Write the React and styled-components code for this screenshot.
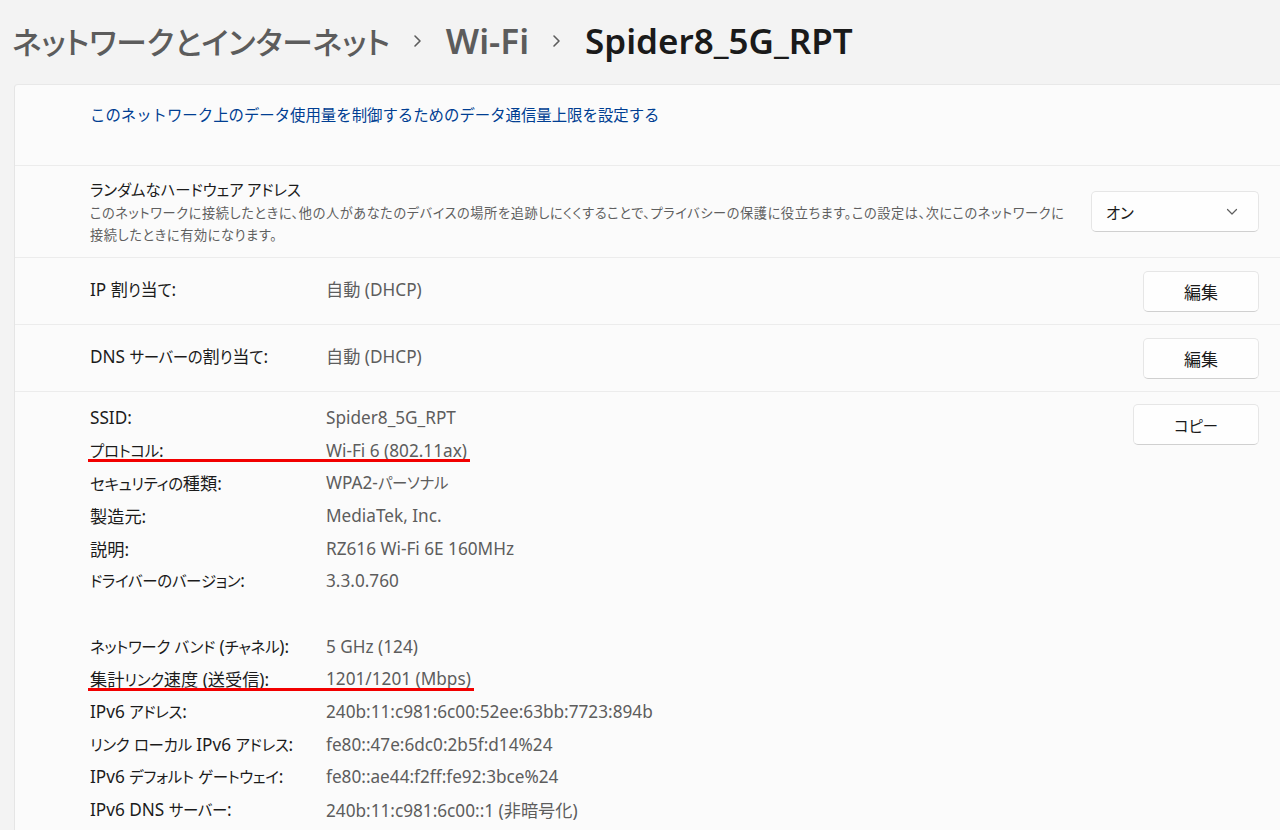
import React from "react";
import styled, { createGlobalStyle } from "styled-components";

const GlobalStyle = createGlobalStyle`
  html, body {
    margin: 0;
    background: #f3f3f3;
    overflow: hidden;
  }
  body {
    font-family: "Noto Sans", "Noto Sans CJK JP", sans-serif;
    color: #1b1b1b;
  }
`;

const jp = `"Noto Sans CJK JP", sans-serif`;

// kana runs in mixed latin/japanese rows are drawn a bit smaller, like Yu Gothic UI
const KANA = /([\u3000-\u30ff\uff01-\uff60]+)/;

const Kana = styled.span`
  font-family: ${jp};
  font-size: 0.9em;
  letter-spacing: -0.3px;
  font-feature-settings: "palt" 1;
`;

const Mixed = ({ text }) =>
  text.split(KANA).map((part, i) =>
    i % 2 ? <Kana key={i}>{part}</Kana> : part,
  );

const StyledPage = styled.div`
  width: 1280px;
  height: 830px;
  display: flex;
  flex-direction: column;
`;

const Breadcrumb = styled.div`
  height: 84px;
  box-sizing: border-box;
  padding: 0 0 3px 12px;
  display: flex;
  align-items: center;
  gap: 22px;
  white-space: nowrap;
`;

const Crumb = styled.span`
  color: ${(p) => (p.$current ? "#1a1a1a" : "#5c5c5c")};
  font-size: ${(p) => (p.$jp ? "30.7px" : "35px")};
  font-weight: ${(p) => (p.$jp ? 500 : 600)};
  font-family: ${(p) => (p.$jp ? jp : "inherit")};
  font-feature-settings: "palt" 1;
`;

const Card = styled.div`
  flex: 1;
  margin-left: 14px;
  background: #fbfbfb;
  border-left: 1px solid #e5e5e5;
  border-top: 1px solid #e8e8e8;
  border-top-left-radius: 4px;
  display: flex;
  flex-direction: column;
`;

const Section = styled.div`
  display: flex;
  align-items: ${(p) => (p.$top ? "flex-start" : "center")};
  justify-content: space-between;
  gap: 24px;
  min-height: ${(p) => p.$height || 0}px;
  padding: ${(p) => p.$pad || "0"} 21px 0 75px;
  box-sizing: border-box;
  border-bottom: ${(p) => (p.$last ? "none" : "1px solid #ececec")};
`;

const LinkText = styled.a`
  color: #003e92;
  font-family: ${jp};
  font-size: 15.4px;
  line-height: 22px;
  text-decoration: none;
  align-self: flex-start;
  margin-top: 18px;
`;

const Title = styled.div`
  font-family: ${jp};
  font-feature-settings: "palt" 1;
  font-size: 15.4px;
  line-height: 22px;
`;

const Description = styled.div`
  margin-top: 2px;
  font-family: ${jp};
  font-feature-settings: "palt" 1;
  font-size: 13.2px;
  line-height: 22px;
  letter-spacing: 0.6px;
  color: #5f5f5f;
  max-width: 975px;
`;

const Button = styled.button`
  width: ${(p) => p.$width}px;
  height: 41px;
  flex-shrink: 0;
  margin-top: ${(p) => p.$offset || 0}px;
  background: #fefefe;
  border: 1px solid #e6e6e6;
  border-bottom-color: #d0d0d0;
  border-radius: 5px;
  font-family: ${jp};
  font-feature-settings: "palt" 1;
  font-size: ${(p) => (p.$kana ? 15.4 : 17)}px;
  color: #1b1b1b;
`;

const Dropdown = styled.div`
  width: 168px;
  height: 41px;
  flex-shrink: 0;
  box-sizing: border-box;
  display: flex;
  align-items: center;
  justify-content: space-between;
  padding: 0 20px 0 14px;
  background: #fefefe;
  border: 1px solid #e6e6e6;
  border-bottom-color: #d0d0d0;
  border-radius: 5px;
  font-family: ${jp};
  font-feature-settings: "palt" 1;
  font-size: 15.4px;
`;

const InfoRow = styled.div`
  display: flex;
  align-items: center;
  height: 32.7px;
  margin-bottom: ${(p) => (p.$lift ? 5 : 0)}px;
  font-size: 17.2px;
  width: fit-content;
  position: relative;
  &::after {
    content: "";
    display: ${(p) => (p.$marked ? "block" : "none")};
    position: absolute;
    left: -2px;
    right: -3px;
    bottom: 4px;
    height: 3px;
    background: #f20000;
  }
`;

const Label = styled.span`
  width: 236px;
  flex-shrink: 0;
  color: #1b1b1b;
  white-space: nowrap;
`;

const Value = styled.span`
  color: #5d5d5d;
  white-space: nowrap;
`;

const Gap = styled.div`
  height: 32.7px;
`;

const Chevron = () => (
  <svg width="12" height="16" viewBox="0 0 12 16">
    <polyline
      points="3,3 8,8 3,13"
      fill="none"
      stroke="#5c5c5c"
      strokeWidth="1.6"
      strokeLinecap="round"
      strokeLinejoin="round"
    />
  </svg>
);

const ChevronDown = () => (
  <svg width="12" height="8" viewBox="0 0 12 8">
    <polyline
      points="1.5,1.5 6,6 10.5,1.5"
      fill="none"
      stroke="#5f5f5f"
      strokeWidth="1.2"
      strokeLinecap="round"
      strokeLinejoin="round"
    />
  </svg>
);

const properties = [
  ["SSID:", "Spider8_5G_RPT"],
  ["プロトコル:", "Wi-Fi 6 (802.11ax)", true],
  ["セキュリティの種類:", "WPA2-パーソナル"],
  ["製造元:", "MediaTek, Inc."],
  ["説明:", "RZ616 Wi-Fi 6E 160MHz"],
  ["ドライバーのバージョン:", "3.3.0.760"],
  null,
  ["ネットワーク バンド (チャネル):", "5 GHz (124)"],
  ["集計リンク速度 (送受信):", "1201/1201 (Mbps)", true],
  ["IPv6 アドレス:", "240b:11:c981:6c00:52ee:63bb:7723:894b"],
  ["リンク ローカル IPv6 アドレス:", "fe80::47e:6dc0:2b5f:d14%24"],
  ["IPv6 デフォルト ゲートウェイ:", "fe80::ae44:f2ff:fe92:3bce%24"],
  ["IPv6 DNS サーバー:", "240b:11:c981:6c00::1 (非暗号化)"],
];

export default function App() {
  return (
    <StyledPage>
      <GlobalStyle />
      <Breadcrumb>
        <Crumb $jp>ネットワークとインターネット</Crumb>
        <Chevron />
        <Crumb>Wi-Fi</Crumb>
        <Chevron />
        <Crumb $current>Spider8_5G_RPT</Crumb>
      </Breadcrumb>
      <Card>
        <Section $height={81}>
          <LinkText href="#">
            このネットワーク上のデータ使用量を制御するためのデータ通信量上限を設定する
          </LinkText>
        </Section>
        <Section $height={92}>
          <div>
            <Title>ランダムなハードウェア アドレス</Title>
            <Description>
              このネットワークに接続したときに、他の人があなたのデバイスの場所を追跡しにくくすることで、プライバシーの保護に役立ちます。この設定は、次にこのネットワークに接続したときに有効になります。
            </Description>
          </div>
          <Dropdown>
            <span>オン</span>
            <ChevronDown />
          </Dropdown>
        </Section>
        <Section $height={67}>
          <InfoRow $lift>
            <Label>
              <Mixed text="IP 割り当て:" />
            </Label>
            <Value>自動 (DHCP)</Value>
          </InfoRow>
          <Button $width={116}>編集</Button>
        </Section>
        <Section $height={67}>
          <InfoRow $lift>
            <Label>
              <Mixed text="DNS サーバーの割り当て:" />
            </Label>
            <Value>自動 (DHCP)</Value>
          </InfoRow>
          <Button $width={116}>編集</Button>
        </Section>
        <Section $top $last $pad="9px">
          <div>
            {properties.map((item, i) =>
              item ? (
                <InfoRow key={i} $marked={item[2]}>
                  <Label>
                    <Mixed text={item[0]} />
                  </Label>
                  <Value>
                    <Mixed text={item[1]} />
                  </Value>
                </InfoRow>
              ) : (
                <Gap key={i} />
              ),
            )}
          </div>
          <Button $width={126} $offset={3} $kana>
            コピー
          </Button>
        </Section>
      </Card>
    </StyledPage>
  );
}
